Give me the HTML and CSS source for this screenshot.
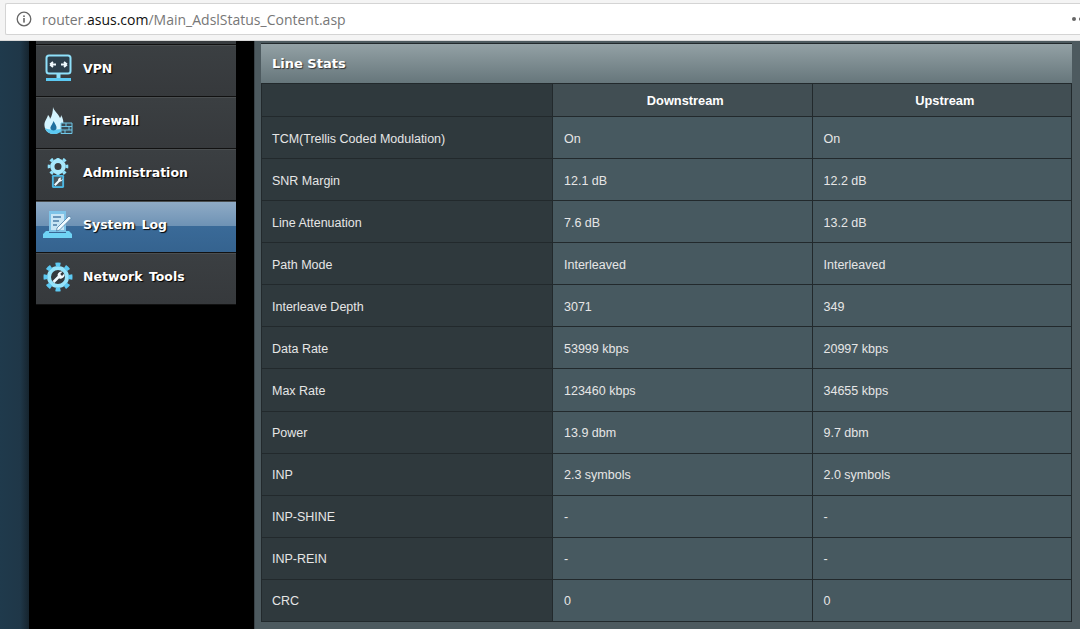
FILE: index.html
```html
<!DOCTYPE html>
<html lang="en">
<head>
<meta charset="utf-8">
<title>Line Stats</title>
<link rel="stylesheet" href="styles.css">
</head>
<body>
<header class="chrome">
  <div class="omnibox">
    <svg class="info" width="16" height="16" viewBox="0 0 16 16"><circle cx="8" cy="8" r="6.800" fill="none" stroke="#666" stroke-width="1.300"/><rect x="7.200" y="7" width="1.600" height="4.600" fill="#666"/><rect x="7.200" y="4.400" width="1.600" height="1.600" fill="#666"/></svg>
    <span class="url">router.<b>asus.com</b>/Main_AdslStatus_Content.asp</span>
    <span class="dots"><i></i><i></i></span>
  </div>
</header>
<div class="page">
  <div class="gutter"></div>
  <nav class="side">
    <div class="menu">
      <div class="item">
        <svg class="ico" viewBox="0 0 30 30"><rect x="3.500" y="1.500" width="24" height="18" rx="2.500" fill="#2c3f4c" stroke="#8fe0fa" stroke-width="2"/><path d="M7 10.500h6M7 10.500l3-2.500M7 10.500l3 2.500M24 10.500h-6M24 10.500l-3-2.500M24 10.500l-3 2.500" stroke="#f0faff" stroke-width="1.800" fill="none"/><path d="M13.500 20h4v4h-4z" fill="#8fe0fa"/><path d="M3 24h25v3H3z" fill="#5cc9f2"/></svg>
        <span>VPN</span>
      </div>
      <div class="item">
        <svg class="ico" viewBox="0 0 30 30"><path d="M10 1c1 4 5 6 7 11 1-1 1-2 1-3 2 3 3 7 2 11-1 5-5 8-9 8-5 0-9-3-9.500-8C1 15 4 13 5 9c1 1 2 2 2 4 2-3 3-8 3-12z" fill="#d4f4ff"/><path d="M2 22c1 4 5 6 9 6 4 0 8-2 9-6-3 2-15 2-18 0z" fill="#5cc9f2"/><path d="M10.500 15c1.500 3 3.500 5 3 7.500-.5 2.500-5.500 2.500-6 0-.5-2 2-4 3-7.500z" fill="#1f6f9f"/><path d="M18 17h11v10.500H18z" fill="#3a4c56" stroke="#6fc6e6"/><path d="M18 20.500h11M18 24h11M23 17v3.500M26 20.500V24M22 24v3.500" stroke="#6fc6e6"/></svg>
        <span>Firewall</span>
      </div>
      <div class="item">
        <svg class="ico" viewBox="0 0 30 32"><circle cx="15" cy="9" r="6" fill="none" stroke="#a8e9fd" stroke-width="4.500"/><circle cx="15" cy="9" r="9.500" fill="none" stroke="#8fe0fa" stroke-width="3" pathLength="80" stroke-dasharray="5 5" stroke-dashoffset="2.500"/><rect x="8.500" y="18" width="13" height="14" rx="1.500" fill="#4cb8e4"/><rect x="10.500" y="20" width="9" height="10" fill="#47555c"/><path d="M11.500 29l5-5" stroke="#eef9ff" stroke-width="2.200" fill="none"/><path d="M15 24a3 3 0 0 1 4-3l-1.500 1.500 1 1 1.500-1.500a3 3 0 0 1-4 3z" fill="#eef9ff"/></svg>
        <span>Administration</span>
      </div>
      <div class="item active">
        <svg class="ico" viewBox="0 0 30 30"><path d="M6 1h17v21H6z" fill="#7fc4e8"/><path d="M8 4h13v16H8z" fill="#c9e6f5"/><path d="M10 7h8M10 11h6M10 15h4" stroke="#4c7ea6" stroke-width="1.500"/><path d="M14 18l12-12 2.500 2-12 12-3 1z" fill="#f2fbff" stroke="#4c7ea6" stroke-width=".8"/><path d="M3 21h3v2h17v-2h3l3 3v4H0v-4z" fill="#6fd3f5"/></svg>
        <span>System Log</span>
      </div>
      <div class="item">
        <svg class="ico" viewBox="0 0 30 30"><circle cx="15" cy="15" r="9" fill="#343a3e" stroke="#96e4fb" stroke-width="4"/><circle cx="15" cy="15" r="12.500" fill="none" stroke="#5cc9f2" stroke-width="4" pathLength="80" stroke-dasharray="5 5" stroke-dashoffset="2.500"/><path d="M10.500 20l5.500-5.500" stroke="#f0faff" stroke-width="2.600"/><path d="M14.500 13a3.800 3.800 0 0 1 5-3.200l-2.300 2.300 1.800 1.800 2.300-2.300a3.800 3.800 0 0 1-5 4.800z" fill="#f0faff"/></svg>
        <span>Network Tools</span>
      </div>
    </div>
  </nav>
  <main class="content">
    <section class="panel">
      <h2 class="title">Line Stats</h2>
      <table class="stats">
        <thead>
          <tr><th class="rowhead"></th><th>Downstream</th><th>Upstream</th></tr>
        </thead>
        <tbody>
          <tr><th class="rowhead">TCM(Trellis Coded Modulation)</th><td>On</td><td>On</td></tr>
          <tr><th class="rowhead">SNR Margin</th><td>12.1 dB</td><td>12.2 dB</td></tr>
          <tr><th class="rowhead">Line Attenuation</th><td>7.6 dB</td><td>13.2 dB</td></tr>
          <tr><th class="rowhead">Path Mode</th><td>Interleaved</td><td>Interleaved</td></tr>
          <tr><th class="rowhead">Interleave Depth</th><td>3071</td><td>349</td></tr>
          <tr><th class="rowhead">Data Rate</th><td>53999 kbps</td><td>20997 kbps</td></tr>
          <tr><th class="rowhead">Max Rate</th><td>123460 kbps</td><td>34655 kbps</td></tr>
          <tr><th class="rowhead">Power</th><td>13.9 dbm</td><td>9.7 dbm</td></tr>
          <tr><th class="rowhead">INP</th><td>2.3 symbols</td><td>2.0 symbols</td></tr>
          <tr><th class="rowhead">INP-SHINE</th><td>-</td><td>-</td></tr>
          <tr><th class="rowhead">INP-REIN</th><td>-</td><td>-</td></tr>
          <tr><th class="rowhead">CRC</th><td>0</td><td>0</td></tr>
        </tbody>
      </table>
    </section>
  </main>
</div>
</body>
</html>
```
FILE: styles.css
```css
* { box-sizing: border-box; }
html, body { margin: 0; height: 100%; overflow: hidden; }
body { width: 1080px; height: 629px; background: #000; font-family: "Liberation Sans", Arial, sans-serif; display: flex; flex-direction: column; }
.chrome { height: 41px; flex: none; background: #f4f4f4; padding: 3px 0 0 5px; border-bottom: 1px solid #d8d8d8; overflow: hidden; }
.omnibox { height: 32px; background: #fff; border: 1px solid #d4d4d4; border-right: 0; border-radius: 2px 0 0 2px; display: flex; align-items: center; padding-left: 10px; }
.info { flex: none; }
.url { margin-left: 10px; font-size: 14px; color: #777; font-family: "Open Sans", "Liberation Sans", sans-serif; }
.url b { font-weight: 400; color: #111; }
.dots { margin-left: auto; margin-right: -3px; display: flex; gap: 3px; }
.dots i { width: 4px; height: 4px; border-radius: 50%; background: #666; }
.page { flex: 1; display: flex; min-height: 0; }
.gutter { width: 29px; flex: none; background: linear-gradient(90deg, #1f3a4c 0, #1f3748 70%, #16242e 100%); }
.side { width: 225px; flex: none; background: #000; padding-left: 7px; }
.menu { width: 200px; padding-top: 3px; background: #383c3f; }
.menu::before { content: ""; display: block; height: 1px; background: #111; }
.item { height: 52px; display: flex; align-items: center; padding: 0 0 5px 7px; border-bottom: 1px solid #111; border-top: 1px solid #4a4e50; color: #fff; font: 700 12.500px "DejaVu Sans", sans-serif; word-spacing: 2px; text-shadow: 1px 1px 1px #000; background: linear-gradient(#3b3f42, #36393c); }
.item span { margin-left: 10px; }
.ico { width: 30px; height: 30px; flex: none; }
.item.active { background: linear-gradient(#8fabc6 0, #6f93b5 47%, #3a6a98 49%, #35638f 100%); }
.content { flex: 1; min-width: 0; background: #4d5a5f; padding: 2px 8px 0 6px; border-left: 1px solid #3a4348; }
.panel { border-top: 1px solid #22292c; }
.title { margin: 0; height: 39px; padding-left: 11px; display: flex; align-items: center; font: 700 13px "DejaVu Sans", sans-serif; color: #fff; background: linear-gradient(#93a1a5, #66767b); text-shadow: 1px 1px 1px #333; }
.stats { width: 100%; table-layout: fixed; border-collapse: collapse; font-size: 12.500px; }
.stats th, .stats td { border: 1px solid #22292c; }
.stats thead th { height: 33px; padding-left: 7px; background: #414e53; color: #fff; font-size: 12.800px; font-weight: 700; }
.stats tbody tr { height: 42.080px; }
.stats tbody th, .stats tbody td { padding-top: 3px; padding-bottom: 1px; }
.stats td { background: #475960; color: #e6e6e6; padding-left: 11px; }
.stats .rowhead { width: 291px; background: #2f393d; color: #e6e6e6; font-weight: 400; text-align: left; padding-left: 10px; }
.stats thead .rowhead { background: #2f393d; }
```
